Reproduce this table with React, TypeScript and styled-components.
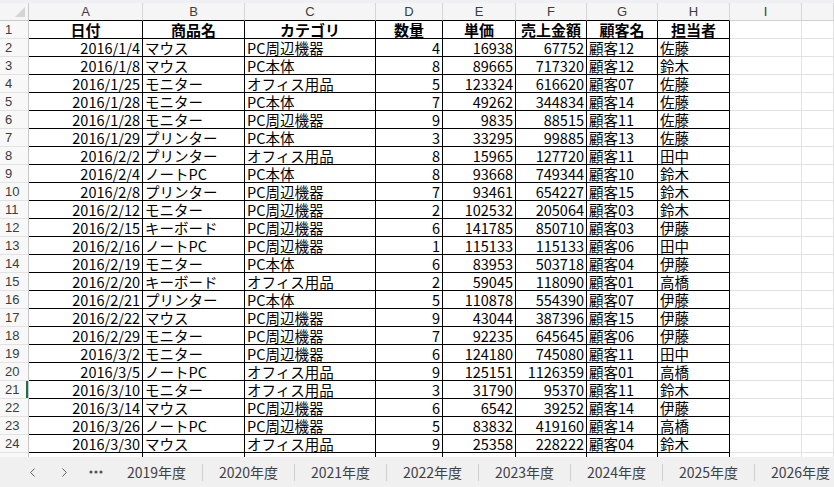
import React from "react";
import styled, { createGlobalStyle } from "styled-components";
import { ChevronLeft, ChevronRight } from "lucide-react";

const GlobalStyle = createGlobalStyle`
  html, body { margin: 0; padding: 0; background: #ffffff; }
  * { box-sizing: border-box; }
`;

const COLS = "29px 114px 102px 131px 67px 73px 71px 71px 72px 72px 1fr";
const FONT = `"Noto Sans CJK JP", "Noto Sans", sans-serif`;

const Page = styled.div`
  width: 834px;
  height: 487px;
  display: flex;
  flex-direction: column;
  overflow: hidden;
  font-family: ${FONT};
  background: #ffffff;
`;

const TopStrip = styled.div`
  height: 3px;
  background: #eef0f3;
  flex: none;
`;

const HeaderRow = styled.div`
  display: grid;
  grid-template-columns: ${COLS};
  height: 18px;
  flex: none;
  background: #f5f5f5;
`;

const Corner = styled.div`
  position: relative;
  border-right: 1px solid #c8c8c8;
  border-bottom: 1px solid #c8c8c8;
`;

const CornerMark = styled.svg`
  position: absolute;
  right: 3px;
  bottom: 3px;
`;

const ColHeader = styled.div<{ $data?: boolean }>`
  display: flex;
  align-items: center;
  justify-content: center;
  font-family: "Liberation Sans", "Noto Sans", sans-serif;
  font-size: 13px;
  line-height: 17px;
  color: #3c3c3c;
  border-right: 1px solid #d6d6d6;
  border-bottom: 1px solid ${(p) => (p.$data ? "#000000" : "#d0d0d0")};
`;

const Body = styled.div`
  flex: 1;
  overflow: hidden;
`;

const Row = styled.div`
  display: grid;
  grid-template-columns: ${COLS};
  height: 18px;
`;

const RowHeader = styled.div<{ $active?: boolean }>`
  display: flex;
  align-items: center;
  padding-left: 5px;
  font-family: "Liberation Sans", "Noto Sans", sans-serif;
  font-size: 13px;
  line-height: 17px;
  color: #3c3c3c;
  background: #f8f8f8;
  border-right: 1px solid #c8c8c8;
  border-bottom: 1px solid #e2e2e2;
  box-shadow: ${(p) => (p.$active ? "inset -2px 0 0 #1e7145" : "none")};
`;

const Cell = styled.div<{ $align?: "left" | "right" | "center"; $bold?: boolean; $data?: boolean }>`
  display: flex;
  align-items: center;
  justify-content: ${(p) =>
    p.$align === "right" ? "flex-end" : p.$align === "center" ? "center" : "flex-start"};
  padding: 0 2px;
  font-size: ${(p) => (p.$bold ? "15px" : "14.5px")};
  font-weight: ${(p) => (p.$bold ? 700 : 400)};
  line-height: 17px;
  height: 18px;
  color: #000000;
  white-space: nowrap;
  border-right: 1px solid ${(p) => (p.$data ? "#000000" : "#e1e1e1")};
  border-bottom: 1px solid ${(p) => (p.$data ? "#000000" : "#e1e1e1")};
`;

const TabBar = styled.div`
  height: 30px;
  flex: none;
  display: flex;
  align-items: center;
  background: #f0f0f0;
  color: #404040;
  font-family: ${FONT};
  font-size: 14px;
`;

const NavArea = styled.div`
  width: 111px;
  display: flex;
  align-items: center;
  padding-left: 24px;
  gap: 16px;
  flex: none;
`;

const NavButton = styled.span`
  display: flex;
  align-items: center;
  justify-content: center;
  width: 16px;
  color: #555555;
`;

const Tab = styled.div`
  width: 91px;
  flex: none;
  display: flex;
  align-items: center;
  justify-content: center;
  white-space: nowrap;
  line-height: 20px;
`;

const Separator = styled.span`
  width: 1px;
  height: 17px;
  background: #cfcfcf;
  flex: none;
`;

type Rec = [string, string, string, number, number, number, string, string];

const data: Rec[] = [
  ["2016/1/4", "マウス", "PC周辺機器", 4, 16938, 67752, "顧客12", "佐藤"],
  ["2016/1/8", "マウス", "PC本体", 8, 89665, 717320, "顧客12", "鈴木"],
  ["2016/1/25", "モニター", "オフィス用品", 5, 123324, 616620, "顧客07", "佐藤"],
  ["2016/1/28", "モニター", "PC本体", 7, 49262, 344834, "顧客14", "佐藤"],
  ["2016/1/28", "モニター", "PC周辺機器", 9, 9835, 88515, "顧客11", "佐藤"],
  ["2016/1/29", "プリンター", "PC本体", 3, 33295, 99885, "顧客13", "佐藤"],
  ["2016/2/2", "プリンター", "オフィス用品", 8, 15965, 127720, "顧客11", "田中"],
  ["2016/2/4", "ノートPC", "PC本体", 8, 93668, 749344, "顧客10", "鈴木"],
  ["2016/2/8", "プリンター", "PC周辺機器", 7, 93461, 654227, "顧客15", "鈴木"],
  ["2016/2/12", "モニター", "PC周辺機器", 2, 102532, 205064, "顧客03", "鈴木"],
  ["2016/2/15", "キーボード", "PC周辺機器", 6, 141785, 850710, "顧客03", "伊藤"],
  ["2016/2/16", "ノートPC", "PC周辺機器", 1, 115133, 115133, "顧客06", "田中"],
  ["2016/2/19", "モニター", "PC本体", 6, 83953, 503718, "顧客04", "伊藤"],
  ["2016/2/20", "キーボード", "オフィス用品", 2, 59045, 118090, "顧客01", "高橋"],
  ["2016/2/21", "プリンター", "PC本体", 5, 110878, 554390, "顧客07", "伊藤"],
  ["2016/2/22", "マウス", "PC周辺機器", 9, 43044, 387396, "顧客15", "伊藤"],
  ["2016/2/29", "モニター", "PC周辺機器", 7, 92235, 645645, "顧客06", "伊藤"],
  ["2016/3/2", "モニター", "PC周辺機器", 6, 124180, 745080, "顧客11", "田中"],
  ["2016/3/5", "ノートPC", "オフィス用品", 9, 125151, 1126359, "顧客01", "高橋"],
  ["2016/3/10", "モニター", "オフィス用品", 3, 31790, 95370, "顧客11", "鈴木"],
  ["2016/3/14", "マウス", "PC周辺機器", 6, 6542, 39252, "顧客14", "伊藤"],
  ["2016/3/26", "ノートPC", "PC周辺機器", 5, 83832, 419160, "顧客14", "高橋"],
  ["2016/3/30", "マウス", "オフィス用品", 9, 25358, 228222, "顧客04", "鈴木"],
];

const letters = ["A", "B", "C", "D", "E", "F", "G", "H", "I", ""];
const headers = ["日付", "商品名", "カテゴリ", "数量", "単価", "売上金額", "顧客名", "担当者"];
const aligns: ("left" | "right")[] = ["right", "left", "left", "right", "right", "right", "left", "left"];
const years = ["2019年度", "2020年度", "2021年度", "2022年度", "2023年度", "2024年度", "2025年度", "2026年度"];

export default function App() {
  return (
    <Page>
      <GlobalStyle />
      <TopStrip />
      <HeaderRow>
        <Corner>
          <CornerMark width="10" height="10" viewBox="0 0 10 10">
            <polygon points="10,0 10,10 0,10" fill="#d4d4d4" />
          </CornerMark>
        </Corner>
        {letters.map((l, i) => (
          <ColHeader key={i} $data={i < 8}>
            {l}
          </ColHeader>
        ))}
      </HeaderRow>
      <Body>
        <Row>
          <RowHeader>1</RowHeader>
          {headers.map((h, i) => (
            <Cell key={i} $align="center" $bold $data>
              {h}
            </Cell>
          ))}
          <Cell />
          <Cell />
        </Row>
        {data.map((r, ri) => (
          <Row key={ri}>
            <RowHeader $active={ri + 2 === 21}>{ri + 2}</RowHeader>
            {r.map((v, ci) => (
              <Cell key={ci} $align={aligns[ci]} $data>
                {v}
              </Cell>
            ))}
            <Cell />
            <Cell />
          </Row>
        ))}
        <Row>
          <RowHeader>25</RowHeader>
          {headers.map((_, i) => (
            <Cell key={i} $data />
          ))}
          <Cell />
          <Cell />
        </Row>
      </Body>
      <TabBar>
        <NavArea>
          <NavButton>
            <ChevronLeft size={15} strokeWidth={1.5} />
          </NavButton>
          <NavButton>
            <ChevronRight size={15} strokeWidth={1.5} />
          </NavButton>
          <NavButton>
            <svg width="14" height="4" viewBox="0 0 14 4">
              <circle cx="2" cy="2" r="1.6" fill="#555" />
              <circle cx="7" cy="2" r="1.6" fill="#555" />
              <circle cx="12" cy="2" r="1.6" fill="#555" />
            </svg>
          </NavButton>
        </NavArea>
        {years.map((y, i) => (
          <React.Fragment key={y}>
            {i > 0 && <Separator />}
            <Tab>{y}</Tab>
          </React.Fragment>
        ))}
      </TabBar>
    </Page>
  );
}
